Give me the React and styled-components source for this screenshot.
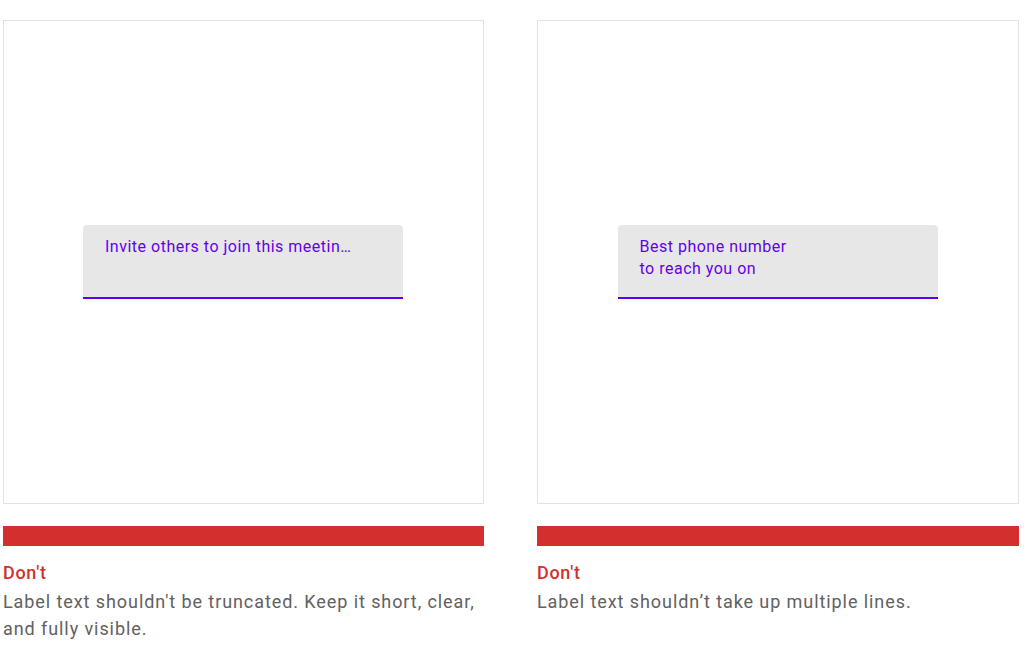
import React from 'react';
import styled, { createGlobalStyle } from 'styled-components';

const Global = createGlobalStyle`
  body {
    margin: 0;
    background: #ffffff;
    font-family: Roboto, "Liberation Sans", sans-serif;
  }
`;

// Two guideline columns side by side
const Page = styled.div`
  display: grid;
  grid-template-columns: 481px 482px;
  column-gap: 53px;
  padding: 20px 0 0 3px;
`;

const Column = styled.div`
  display: flex;
  flex-direction: column;
`;

const Frame = styled.div`
  height: 484px;
  border: 1px solid #e2e2e2;
  box-sizing: border-box;
  display: flex;
  align-items: center;
  justify-content: center;
`;

const Field = styled.div`
  width: 320px;
  height: 74px;
  box-sizing: border-box;
  background: #e7e7e7;
  border-radius: 4px 4px 0 0;
  border-bottom: 2px solid #6200ee;
  padding: 11px 22px 0;
  margin-left: -1px;
`;

const Label = styled.div`
  color: #6200ee;
  font-size: 16px;
  line-height: 22px;
  letter-spacing: 0.5px;
`;

const Bar = styled.div`
  height: 20px;
  margin-top: 22px;
  background: #d32f2f;
`;

const Verdict = styled.div`
  margin-top: 15px;
  color: #d32f2f;
  font-size: 18px;
  font-weight: 500;
  line-height: 24px;
  letter-spacing: 0.7px;
`;

const Caption = styled.p`
  margin: 3px 0 0;
  color: #616161;
  font-size: 18px;
  line-height: 27px;
  letter-spacing: 0.92px;
`;

const examples = [
  {
    label: 'Invite others to join this meetin…',
    caption: "Label text shouldn't be truncated. Keep it short, clear, and fully visible.",
  },
  {
    label: (
      <>
        Best phone number
        <br />
        to reach you on
      </>
    ),
    caption: 'Label text shouldn’t take up multiple lines.',
  },
];

const App = () => {
  return (
    <>
      <Global />
      <Page>
        {examples.map((ex, i) => (
          <Column key={i}>
            <Frame>
              <Field>
                <Label>{ex.label}</Label>
              </Field>
            </Frame>
            <Bar />
            <Verdict>Don't</Verdict>
            <Caption>{ex.caption}</Caption>
          </Column>
        ))}
      </Page>
    </>
  );
};

export default App;
